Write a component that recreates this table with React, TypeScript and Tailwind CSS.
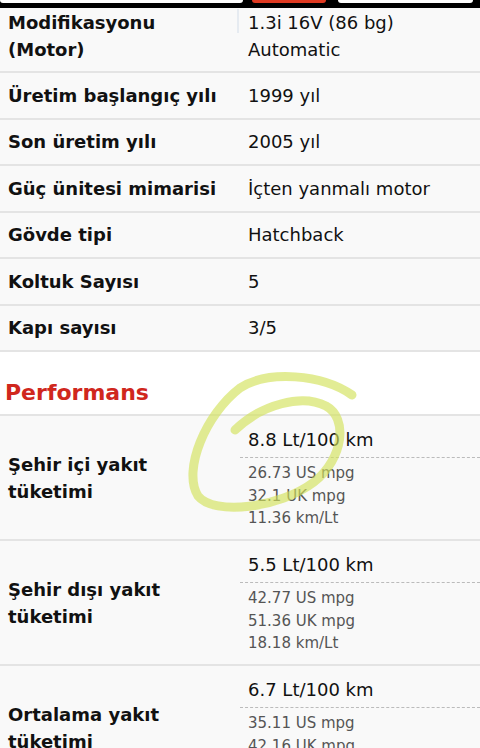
import React from "react";

type Spec = { label: string; value: React.ReactNode };

const specs: Spec[] = [
  { label: "Üretim başlangıç yılı", value: "1999 yıl" },
  { label: "Son üretim yılı", value: "2005 yıl" },
  { label: "Güç ünitesi mimarisi", value: "İçten yanmalı motor" },
  { label: "Gövde tipi", value: "Hatchback" },
  { label: "Koltuk Sayısı", value: "5" },
  { label: "Kapı sayısı", value: "3/5" },
];

type Fuel = { label: string; main: string; alt: string[] };

const fuel: Fuel[] = [
  { label: "Şehir içi yakıt tüketimi", main: "8.8 Lt/100 km", alt: ["26.73 US mpg", "32.1 UK mpg", "11.36 km/Lt"] },
  { label: "Şehir dışı yakıt tüketimi", main: "5.5 Lt/100 km", alt: ["42.77 US mpg", "51.36 UK mpg", "18.18 km/Lt"] },
  { label: "Ortalama yakıt tüketimi", main: "6.7 Lt/100 km", alt: ["35.11 US mpg", "42.16 UK mpg", "14.93 km/Lt"] },
];

function SpecRow({ label, value }: Spec) {
  return (
    <div className="flex h-[46.5px] items-center border-b-2 border-[#e4e4e4] bg-[#f9f9f9]">
      <div className="w-[240px] shrink-0 pl-2 text-[18px] font-bold leading-[27px] text-[#111]">{label}</div>
      <div className="pl-2 text-[18px] leading-[27px] text-[#111]">{value}</div>
    </div>
  );
}

function FuelRow({ label, main, alt }: Fuel) {
  return (
    <div className="flex h-[125px] items-stretch border-b-2 border-[#e4e4e4] bg-[#f9f9f9]">
      <div className="flex w-[240px] shrink-0 items-center pl-2 pr-16 text-[18px] font-bold leading-[27px] text-[#111]">
        {label}
      </div>
      <div className="flex flex-1 flex-col pt-[10px]">
        <div className="border-b border-dashed border-[#bbb] pb-[4px] pl-2 text-[18px] leading-[27px] text-[#111]">{main}</div>
        <div className="pl-2 pt-[4px] text-[15px] leading-[22.5px] text-[#555]">
          {alt.map((a) => (
            <div key={a}>{a}</div>
          ))}
        </div>
      </div>
    </div>
  );
}

export default function App() {
  return (
    <div
      className="relative h-[748px] w-[480px] overflow-hidden bg-white"
      style={{ fontFamily: '"DejaVu Sans", Verdana, sans-serif' }}
    >
      {/* toolbar edge */}
      <div className="flex h-[8px] items-start bg-black">
        <div className="h-[3px] w-[243px] rounded-b-[4px] bg-white" />
        <div className="ml-[9px] h-[3px] w-[74px] rounded-b-[4px] bg-[#e03a22]" />
        <div className="ml-[12px] h-[3px] w-[135px] rounded-b-[4px] bg-white" />
      </div>

      <div className="flex h-[65px] items-start border-b-2 border-[#e4e4e4] bg-[#f9f9f9] pt-[1px]">
        <div className="w-[240px] shrink-0 pl-2 text-[18px] font-bold leading-[27px] text-[#111]">
          Modifikasyonu
          <br />
          (Motor)
        </div>
        <div className="relative self-stretch">
          <div className="absolute left-[-3px] top-0 h-[24px] w-[2px] bg-[#e6ebf1]" />
        </div>
        <div className="pl-2 text-[18px] leading-[27px] text-[#111]">
          1.3i 16V (86 bg)
          <br />
          Automatic
        </div>
      </div>

      {specs.map((s) => (
        <SpecRow key={s.label} {...s} />
      ))}

      <div className="flex h-[64px] items-end border-b-2 border-[#e4e4e4] bg-white pb-[6px] pl-[5px]">
        <h2 className="text-[22px] font-bold leading-[30px] text-[#d0271d]">Performans</h2>
      </div>

      {fuel.map((f) => (
        <FuelRow key={f.label} {...f} />
      ))}

      {/* highlighter scribble */}
      <svg className="pointer-events-none absolute left-0 top-0" width="480" height="748" viewBox="0 0 480 748">
        <path
          d="M352,395 C322,374 268,370 240,388 C206,414 182,470 198,496 C214,516 280,508 314,482 C344,458 348,418 326,406 C302,394 262,404 235,430"
          fill="none"
          stroke="#d2e25a"
          strokeOpacity="0.65"
          strokeWidth="9"
          strokeLinecap="round"
        />
      </svg>
    </div>
  );
}
